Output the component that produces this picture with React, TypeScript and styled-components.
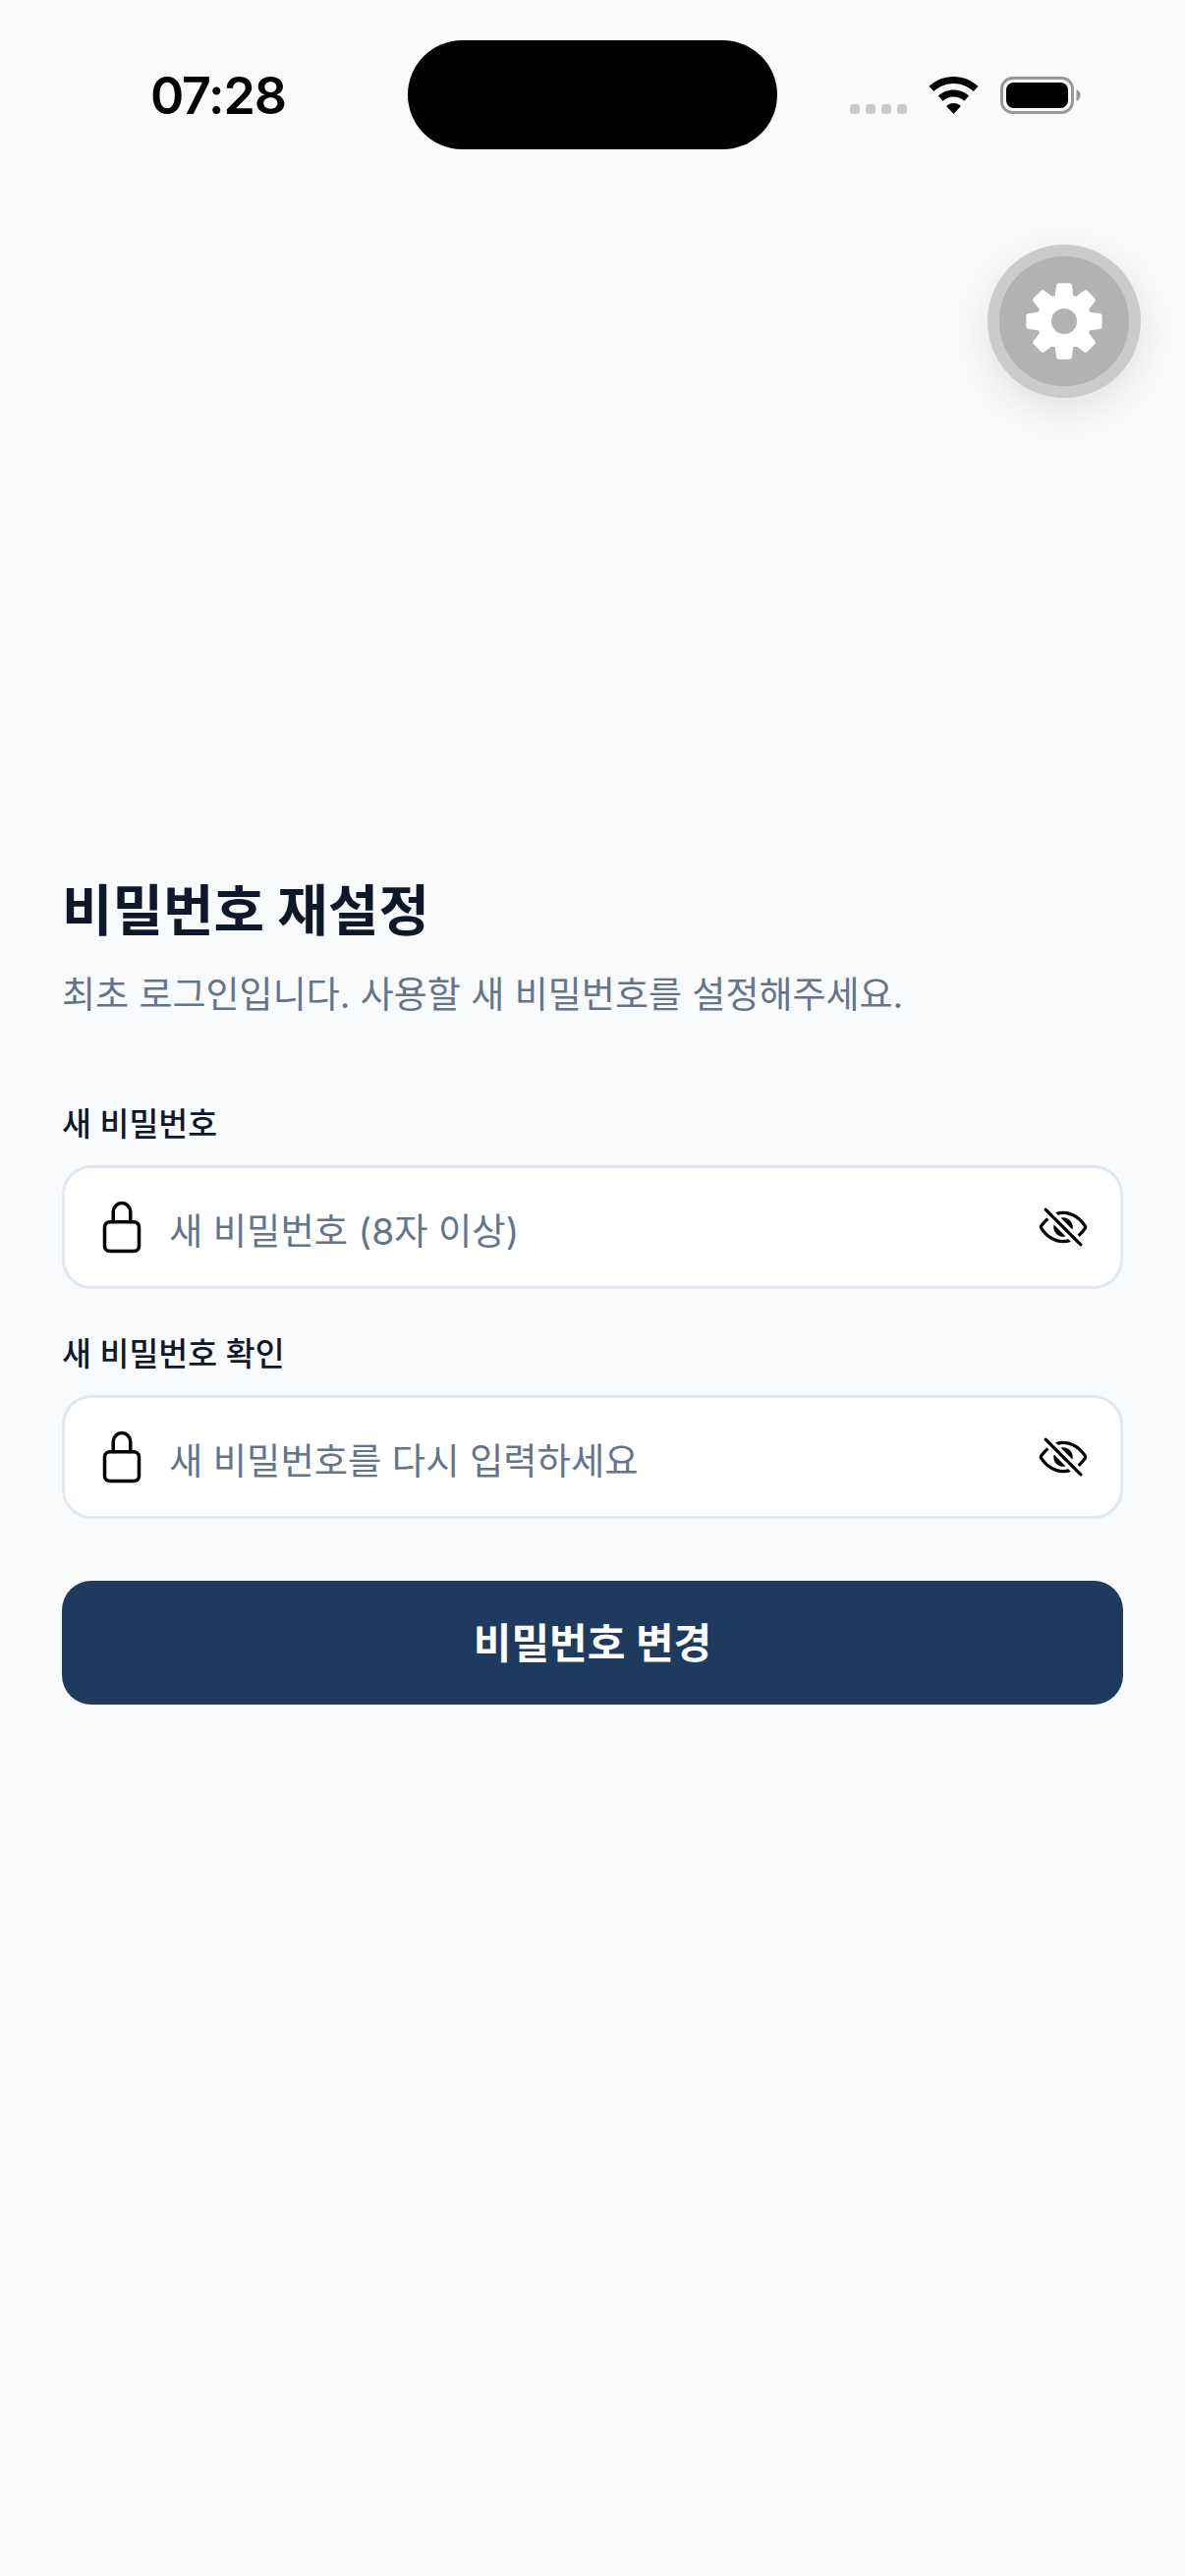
import React from 'react';
import styled, { createGlobalStyle } from 'styled-components';
import { IoEyeOffOutline, IoLockClosedOutline } from 'react-icons/io5';

const GlobalStyle = createGlobalStyle`
  html, body {
    margin: 0;
    padding: 0;
    background: #f9fafc;
  }
  * {
    box-sizing: border-box;
  }
`;

const Screen = styled.div`
  position: relative;
  width: 1206px;
  height: 2622px;
  overflow: hidden;
  background: #f9fafc;
  font-family: Inter, 'Noto Sans CJK KR', 'Noto Sans', sans-serif;
`;

const StatusBar = styled.div`
  display: flex;
  height: 152px;
  padding: 41px 0 0 153px;
`;

const Time = styled.div`
  width: 262px;
  padding-top: 26px;
  font-size: 52px;
  font-weight: 600;
  letter-spacing: -1.2px;
  line-height: 62px;
  color: #000;
`;

const Island = styled.div`
  width: 376px;
  height: 111px;
  border-radius: 56px;
  background: #000;
`;

const StatusIcons = styled.div`
  display: flex;
  align-items: flex-end;
  height: 75px;
  margin-left: 74px;
`;

const Dots = styled.div`
  display: flex;
  gap: 6px;
  margin-right: 22px;
`;

const Dot = styled.span`
  width: 10px;
  height: 10px;
  border-radius: 3px;
  background: #c9cacc;
`;

const Wifi = styled.svg`
  display: block;
  width: 51px;
  height: 38px;
  margin-right: 22px;
`;

const Battery = styled.svg`
  display: block;
  width: 82px;
  height: 38px;
`;

const SettingsButton = styled.button`
  position: absolute;
  top: 249px;
  left: 1005px;
  display: flex;
  align-items: center;
  justify-content: center;
  width: 156px;
  height: 156px;
  padding: 0;
  border: 12px solid #c9cbcd;
  border-radius: 50%;
  background: #b1b2b4;
  box-shadow: 0 12px 40px rgba(0, 0, 0, 0.1);
`;

const GearIcon = styled.svg`
  display: block;
  width: 84px;
  height: 84px;
`;

const Form = styled.main`
  display: flex;
  flex-direction: column;
  margin-top: 739px;
  padding: 0 63px;
`;

const Title = styled.h1`
  margin: 0;
  font-size: 56px;
  font-weight: 700;
  line-height: 72px;
  color: #0f172a;
`;

const Subtitle = styled.p`
  margin: 20px 0 0;
  font-size: 37px;
  font-weight: 400;
  line-height: 60px;
  color: #64748b;
`;

const Field = styled.div<{ $first?: boolean }>`
  display: flex;
  flex-direction: column;
  margin-top: ${p => (p.$first ? '76px' : '41px')};
`;

const Label = styled.label`
  margin-bottom: 15px;
  font-size: 32.500px;
  font-weight: 500;
  line-height: 52px;
  color: #0f172a;
`;

const InputBox = styled.div`
  display: flex;
  align-items: center;
  height: 126px;
  padding: 0 32px 0 30px;
  border: 3px solid #e2e8f0;
  border-radius: 30px;
  background: #fff;
  color: #000;
`;

const Placeholder = styled.span`
  flex: 1;
  margin-left: 20px;
  padding-top: 10px;
  font-size: 37.300px;
  font-weight: 400;
  line-height: 60px;
  color: #64748b;
`;

const SubmitButton = styled.button`
  height: 126px;
  margin-top: 63px;
  padding: 0 0 6px;
  border: 0;
  border-radius: 30px;
  background: #1e3a5f;
  font-family: inherit;
  font-size: 42px;
  font-weight: 600;
  color: #fff;
`;

// eight rounded teeth round a hole; the round joins come from the stroke
const gearPoints = Array.from({ length: 8 }, (_, i) => i * 45 - 90)
  .flatMap(a => [
    [25, a - 15],
    [36, a - 8],
    [36, a + 8],
    [25, a + 15],
  ])
  .map(([r, deg]) => {
    const rad = (deg * Math.PI) / 180;
    return `${(42 + r * Math.cos(rad)).toFixed(2)},${(42 + r * Math.sin(rad)).toFixed(2)}`;
  })
  .join(' ');

interface PasswordFieldProps {
  first?: boolean;
  label: string;
  placeholder: string;
}

const PasswordField: React.FC<PasswordFieldProps> = ({ first, label, placeholder }) => (
  <Field $first={first}>
    <Label>{label}</Label>
    <InputBox>
      <IoLockClosedOutline size={56} />
      <Placeholder>{placeholder}</Placeholder>
      <IoEyeOffOutline size={52} />
    </InputBox>
  </Field>
);

const App: React.FC = () => (
  <Screen>
    <GlobalStyle />
    <StatusBar>
      <Time>07:28</Time>
      <Island />
      <StatusIcons>
        <Dots>
          <Dot />
          <Dot />
          <Dot />
          <Dot />
        </Dots>
        <Wifi viewBox="0 0 51 38">
          <path
            fill="#000"
            d="M25.500 0C35 0 43.800 3.700 50.500 9.800L45.800 15C40.400 10 33.300 7 25.500 7S10.600 10 5.200 15L.5 9.800C7.200 3.700 16 0 25.500 0Z"
          />
          <path
            fill="#000"
            d="M25.500 13.500c6 0 11.500 2.300 15.600 6.100l-4.700 5.200c-2.900-2.700-6.700-4.300-10.900-4.300s-8 1.600-10.900 4.300l-4.700-5.200c4.100-3.800 9.600-6.100 15.600-6.100Z"
          />
          <path fill="#000" d="M25.500 27c2.900 0 5.500 1.100 7.400 2.900L25.500 38l-7.400-8.100c1.900-1.800 4.500-2.900 7.400-2.900Z" />
        </Wifi>
        <Battery viewBox="0 0 82 38">
          <rect x="1.500" y="1.500" width="72" height="35" rx="11" fill="none" stroke="#98989a" strokeWidth="3" />
          <rect x="6" y="6" width="63" height="26" rx="7.500" fill="#000" />
          <path fill="#98989a" d="M77.500 13c2.500 1 4 3.300 4 6s-1.500 5-4 6Z" />
        </Battery>
      </StatusIcons>
    </StatusBar>
    <SettingsButton>
      <GearIcon viewBox="0 0 84 84">
        <polygon points={gearPoints} fill="#fff" stroke="#fff" strokeWidth="6" strokeLinejoin="round" />
        <circle cx="42" cy="42" r="13" fill="#b1b2b4" />
      </GearIcon>
    </SettingsButton>
    <Form>
      <Title>비밀번호 재설정</Title>
      <Subtitle>최초 로그인입니다. 사용할 새 비밀번호를 설정해주세요.</Subtitle>
      <PasswordField first label="새 비밀번호" placeholder="새 비밀번호 (8자 이상)" />
      <PasswordField label="새 비밀번호 확인" placeholder="새 비밀번호를 다시 입력하세요" />
      <SubmitButton>비밀번호 변경</SubmitButton>
    </Form>
  </Screen>
);

export default App;
